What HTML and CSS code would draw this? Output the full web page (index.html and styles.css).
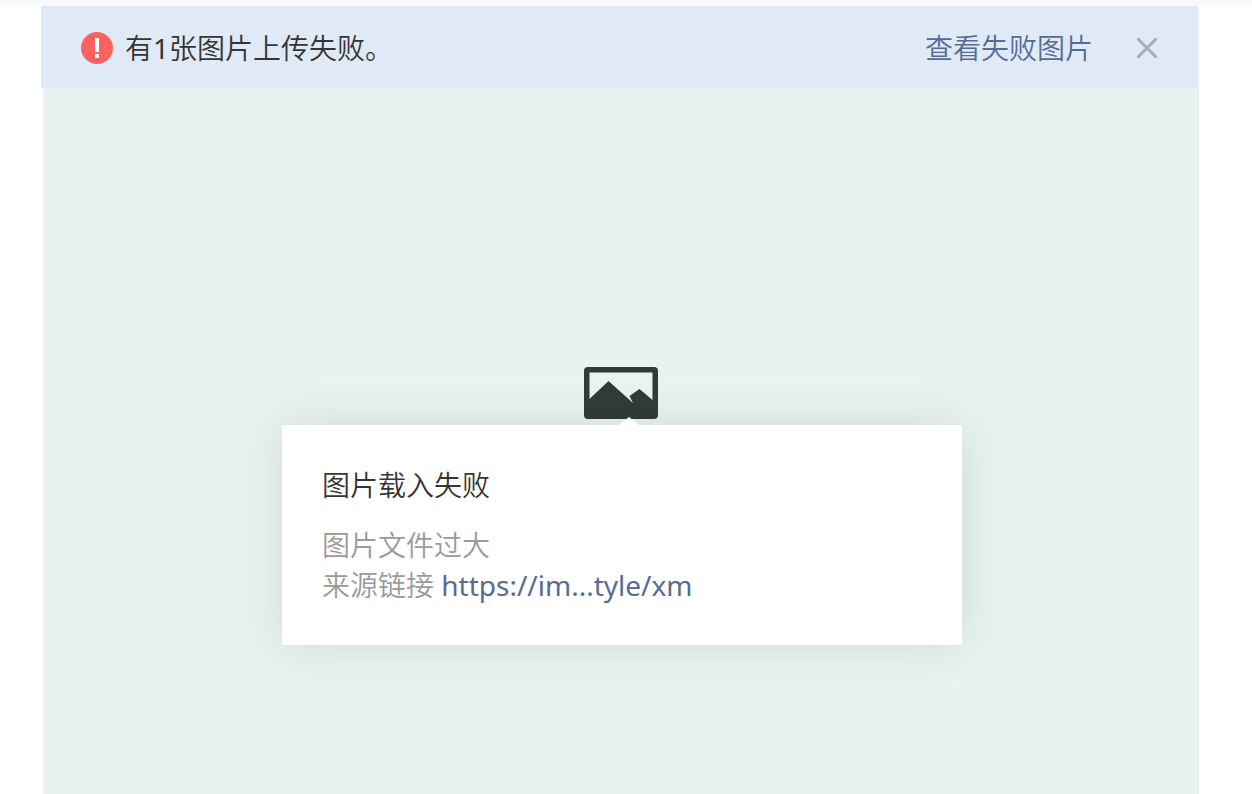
FILE: index.html
```html
<!DOCTYPE html>
<html lang="zh-CN">
<head>
  <meta charset="UTF-8">
  <meta name="viewport" content="width=device-width, initial-scale=1.0">
  <title>图片上传</title>
  <link rel="stylesheet" href="styles.css">
</head>
<body>
  <main class="editor">
    <div class="notice" role="alert">
      <svg class="notice-icon" viewBox="0 0 32 32" aria-hidden="true">
        <circle cx="16" cy="16" r="16" fill="#fa6262"/>
        <path d="M14 6h4v14h-4zM14 22h4v4h-4z" fill="#fff"/>
      </svg>
      <p class="notice-text">有<span class="count">1</span>张图片上传失败。</p>
      <a class="link" href="#failed">查看失败图片</a>
      <button class="notice-close" type="button" aria-label="关闭">
        <svg viewBox="0 0 20 20" aria-hidden="true">
          <path d="M0 0L20 20M20 0L0 20" stroke="#a9acaf" stroke-width="3"/>
        </svg>
      </button>
    </div>

    <div class="failed-image" id="failed">
      <svg class="image-icon" viewBox="0 0 74 52" aria-hidden="true">
        <path fill-rule="evenodd" fill="#323b35" d="M4 0H70Q74 0 74 4V48Q74 52 70 52H4Q0 52 0 48V4Q0 0 4 0ZM5.500 5.500V32L24.500 14L49 36L45.500 29L55.500 22L68.500 33V5.500Z"/>
      </svg>
      <div class="popover">
        <p class="popover-title">图片载入失败</p>
        <p class="popover-desc">图片文件过大<br>来源链接 <a class="link source-url" href="#source">https://im...tyle/xm</a></p>
      </div>
    </div>
  </main>

  <script>
    const notice = document.querySelector('.notice');

    document.querySelector('.notice-close').addEventListener('click', () => {
      notice.remove();
    });
  </script>
</body>
</html>
```

FILE: styles.css
```css
* {
  box-sizing: border-box;
}

body {
  display: flex;
  flex-direction: column;
  min-height: 100vh;
  margin: 0;
  border-top: 6px solid #fafafa;
  background-color: #fff;
  color: #353535;
  font-family: "Noto Sans", "Noto Sans CJK SC", sans-serif;
  font-size: 28px;
  font-weight: 350;
  line-height: 40px;
}

p {
  margin: 0;
}

.link {
  color: #576b95;
  text-decoration: none;
}

.count,
.source-url {
  font-weight: 400;
}

.editor {
  flex: 1;
  margin: 0 53px 0 43px;
  background-color: #e8f2f0;
}

/* Upload notice */
.notice {
  display: flex;
  align-items: center;
  margin: 0 2px 0 -2px;
  padding: 22px 40px 20px;
  background-color: #dfeaf6;
}

.notice-icon {
  width: 32px;
  height: 32px;
  margin-right: 12px;
}

.notice-text {
  flex: 1;
}

.notice-close {
  display: flex;
  margin-left: 44px;
  padding: 0;
  border: none;
  background: none;
  cursor: pointer;
}

.notice-close svg {
  width: 20px;
  height: 20px;
}

/* Broken image and its popover */
.failed-image {
  position: relative;
  width: 74px;
  margin: 279px auto 0;
}

.image-icon {
  display: block;
  width: 74px;
  height: 52px;
}

.popover {
  position: absolute;
  top: 58px;
  left: 38px;
  width: 680px;
  padding: 40px;
  border-radius: 2px;
  background-color: #fff;
  box-shadow: 0 0 50px rgba(0, 20, 15, 0.1);
  transform: translateX(-50%);
}

.popover::before {
  content: "";
  position: absolute;
  bottom: 100%;
  left: 337px;
  border: 10px solid transparent;
  border-top: none;
  border-bottom: 8px solid #fff;
}

.popover-title {
  margin-bottom: 20px;
}

.popover-desc {
  color: #9a9a9a;
}
```
